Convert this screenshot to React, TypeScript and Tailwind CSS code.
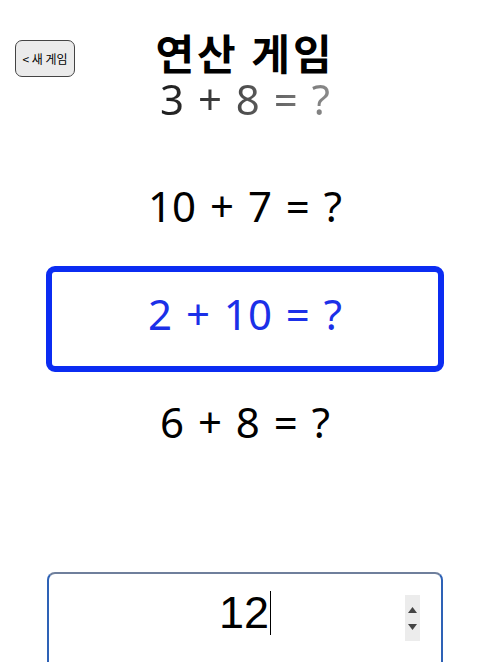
import React from 'react'

const problems = [
  { text: '10 + 7 = ?', active: false },
  { text: '2 + 10 = ?', active: true },
  { text: '6 + 8 = ?', active: false },
]

const mathFont = { fontFamily: '"Noto Sans", "Open Sans", sans-serif' }

export default function App() {
  return (
    <div
      className="min-h-screen w-full bg-white overflow-hidden"
      style={{ fontFamily: '"Noto Sans CJK KR", "Noto Sans", sans-serif' }}
    >
      {/* Header */}
      <div className="grid grid-cols-[1fr_auto_1fr] items-start pt-[27px]">
        <div className="pl-[15px] pt-[13px]">
          <button className="h-[37px] w-[60px] rounded-[7px] border-[1.5px] border-[#444] bg-[#ebebeb] text-[12px] text-black leading-none">
            &lt; 새 게임
          </button>
        </div>
        <div className="flex flex-col items-center">
          <h1 className="text-[42px] font-bold tracking-[3px] leading-[50px] text-black">연산 게임</h1>
          <div
            className="text-[42px] leading-[44px] [word-spacing:3px] bg-gradient-to-r from-[#1c1c1c] to-[#8a8a8a] bg-clip-text text-transparent"
            style={mathFont}
          >
            3 + 8 = ?
          </div>
        </div>
        <div />
      </div>

      {/* Problem list */}
      <div className="mt-[37px] flex flex-col items-center gap-[2px] px-[46px] [word-spacing:3px]" style={mathFont}>
        {problems.map(p =>
          p.active ? (
            <div
              key={p.text}
              className="flex h-[106px] w-full items-center justify-center rounded-[9px] border-[6px] border-[#0b2cf2] pb-[12px] text-[42px] text-[#1b30e8]"
            >
              {p.text}
            </div>
          ) : (
            <div key={p.text} className="flex h-[106px] w-full items-center justify-center pb-[12px] text-[42px] text-black">
              {p.text}
            </div>
          )
        )}
      </div>

      {/* Answer input */}
      <div className="mt-[92px] px-[47px]">
        <div className="relative flex h-[100px] items-start justify-center rounded-t-[8px] border-2 border-[#2e62b6] border-t-[#6f7f9c] pt-[8px]">
          <div
            className="flex items-center text-[45px] leading-[62px] text-black"
            style={{ fontFamily: '"Liberation Sans", Arial, sans-serif' }}
          >
            12
            <span className="ml-[1px] inline-block h-[44px] w-px bg-black" />
          </div>
          <div className="absolute right-[21px] top-[21px] flex h-[46px] w-[15px] flex-col items-center justify-center gap-[11px] bg-[#ececec]">
            <svg width="9" height="6" viewBox="0 0 9 6"><path d="M4.5 0L9 6H0Z" fill="#444" /></svg>
            <svg width="9" height="6" viewBox="0 0 9 6"><path d="M0 0H9L4.5 6Z" fill="#444" /></svg>
          </div>
        </div>
      </div>
    </div>
  )
}
